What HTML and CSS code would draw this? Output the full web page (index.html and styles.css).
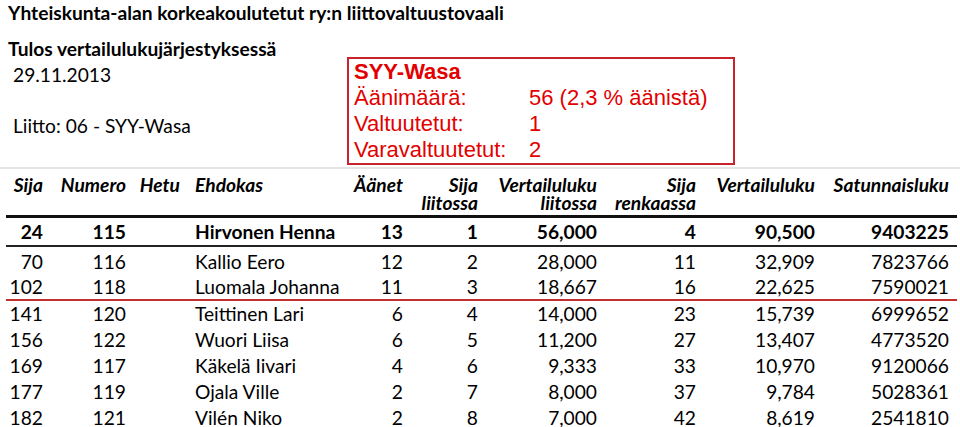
FILE: index.html
```html
<!DOCTYPE html>
<html lang="fi">
<head>
<meta charset="utf-8">
<title>Tulos</title>
<link rel="stylesheet" href="styles.css">
</head>
<body>
<div class="page">
  <h1 class="title">Yhteiskunta-alan korkeakoulutetut ry:n liittovaltuustovaali</h1>
  <div class="top">
    <div class="left">
      <div class="sub">Tulos vertailulukujärjestyksessä</div>
      <div class="date">29.11.2013</div>
      <div class="liitto">Liitto: 06 - SYY-Wasa</div>
    </div>
    <div class="box">
      <div class="box-name">SYY-Wasa</div>
      <div class="box-grid">
        <span>Äänimäärä:</span><span>56 (2,3 % äänistä)</span>
        <span>Valtuutetut:</span><span>1</span>
        <span>Varavaltuutetut:</span><span>2</span>
      </div>
    </div>
  </div>
  <div class="sep"></div>
  <table class="results">
    <colgroup>
      <col class="c1"><col class="c2"><col class="c3"><col class="c4"><col class="c5">
      <col class="c6"><col class="c7"><col class="c8"><col class="c9"><col class="c10">
    </colgroup>
    <thead>
      <tr>
        <th>Sija</th><th>Numero</th><th>Hetu</th><th class="name">Ehdokas</th><th>Äänet</th>
        <th>Sija<br>liitossa</th><th>Vertailuluku<br>liitossa</th><th>Sija<br>renkaassa</th><th>Vertailuluku</th><th class="last">Satunnaisluku</th>
      </tr>
    </thead>
    <tbody>
      <tr class="elected">
        <td>24</td><td>115</td><td></td><td class="name">Hirvonen Henna</td><td>13</td><td>1</td><td>56,000</td><td>4</td><td>90,500</td><td class="last">9403225</td>
      </tr>
      <tr class="first">
        <td>70</td><td>116</td><td></td><td class="name">Kallio Eero</td><td>12</td><td>2</td><td>28,000</td><td>11</td><td>32,909</td><td class="last">7823766</td>
      </tr>
      <tr class="cut">
        <td>102</td><td>118</td><td></td><td class="name">Luomala Johanna</td><td>11</td><td>3</td><td>18,667</td><td>16</td><td>22,625</td><td class="last">7590021</td>
      </tr>
      <tr>
        <td>141</td><td>120</td><td></td><td class="name">Teittinen Lari</td><td>6</td><td>4</td><td>14,000</td><td>23</td><td>15,739</td><td class="last">6999652</td>
      </tr>
      <tr>
        <td>156</td><td>122</td><td></td><td class="name">Wuori Liisa</td><td>6</td><td>5</td><td>11,200</td><td>27</td><td>13,407</td><td class="last">4773520</td>
      </tr>
      <tr>
        <td>169</td><td>117</td><td></td><td class="name">Käkelä Iivari</td><td>4</td><td>6</td><td>9,333</td><td>33</td><td>10,970</td><td class="last">9120066</td>
      </tr>
      <tr>
        <td>177</td><td>119</td><td></td><td class="name">Ojala Ville</td><td>2</td><td>7</td><td>8,000</td><td>37</td><td>9,784</td><td class="last">5028361</td>
      </tr>
      <tr>
        <td>182</td><td>121</td><td></td><td class="name">Vilén Niko</td><td>2</td><td>8</td><td>7,000</td><td>42</td><td>8,619</td><td class="last">2541810</td>
      </tr>
    </tbody>
  </table>
</div>
</body>
</html>
```
FILE: styles.css
```css
html, body {
  margin: 0;
  padding: 0;
  background: #fff;
}
body {
  font-family: Lato, "Noto Sans", "Liberation Sans", sans-serif;
  color: #000;
  overflow: hidden;
}
.page {
  width: 960px;
  height: 427px;
  overflow: hidden;
}
.title {
  margin: 0;
  padding-left: 8px;
  font-size: 19.2px;
  font-weight: 700;
  line-height: 26px;
  height: 26px;
}
.top {
  display: flex;
  align-items: flex-start;
}
.left {
  width: 347px;
  flex: none;
}
.sub {
  margin-top: 10px;
  padding-left: 8px;
  font-size: 19.2px;
  font-weight: 700;
  line-height: 26px;
}
.date {
  padding-left: 13px;
  font-size: 19.2px;
  line-height: 26px;
}
.liitto {
  margin-top: 25px;
  padding-left: 13px;
  font-size: 19.2px;
  line-height: 26px;
}
.box {
  margin-top: 31px;
  width: 379px;
  height: 104px;
  border: 2px solid #c8232c;
  padding: 0 0 0 5px;
  font-family: "Liberation Sans", Arial, sans-serif;
  font-size: 22px;
  line-height: 26px;
  color: #e30000;
}
.box-name {
  font-weight: 700;
}
.box-grid {
  display: grid;
  grid-template-columns: 175px auto;
}
.sep {
  height: 2px;
  margin-top: 2px;
  background: #e4e4e4;
}
.results {
  margin-left: 6px;
  border-collapse: collapse;
  table-layout: fixed;
  width: 951px;
  font-size: 19.2px;
}
.c1 { width: 37px; }
.c2 { width: 83px; }
.c3 { width: 54px; }
.c4 { width: 165px; }
.c5 { width: 58px; }
.c6 { width: 75px; }
.c7 { width: 119px; }
.c8 { width: 99px; }
.c9 { width: 119px; }
.c10 { width: 142px; }
.results th, .results td {
  padding: 0;
  text-align: right;
  white-space: nowrap;
  vertical-align: top;
}
.results .name {
  text-align: left;
  padding-left: 15px;
}
.results .last {
  padding-right: 8px;
}
.results th {
  font-style: italic;
  font-weight: 700;
  line-height: 18px;
  padding-top: 7px;
  padding-bottom: 3px;
  border-bottom: 3px solid #111;
}
.results td {
  line-height: 26px;
  height: 26px;
}
.results tr.elected td {
  font-weight: 700;
  line-height: 27px;
  height: 27px;
  border-bottom: 2px solid #222;
}
.results tr.first td {
  padding-top: 2px;
}
.results tr.cut td {
  line-height: 24px;
  height: 24px;
  border-bottom: 2px solid #c0302c;
}
```
